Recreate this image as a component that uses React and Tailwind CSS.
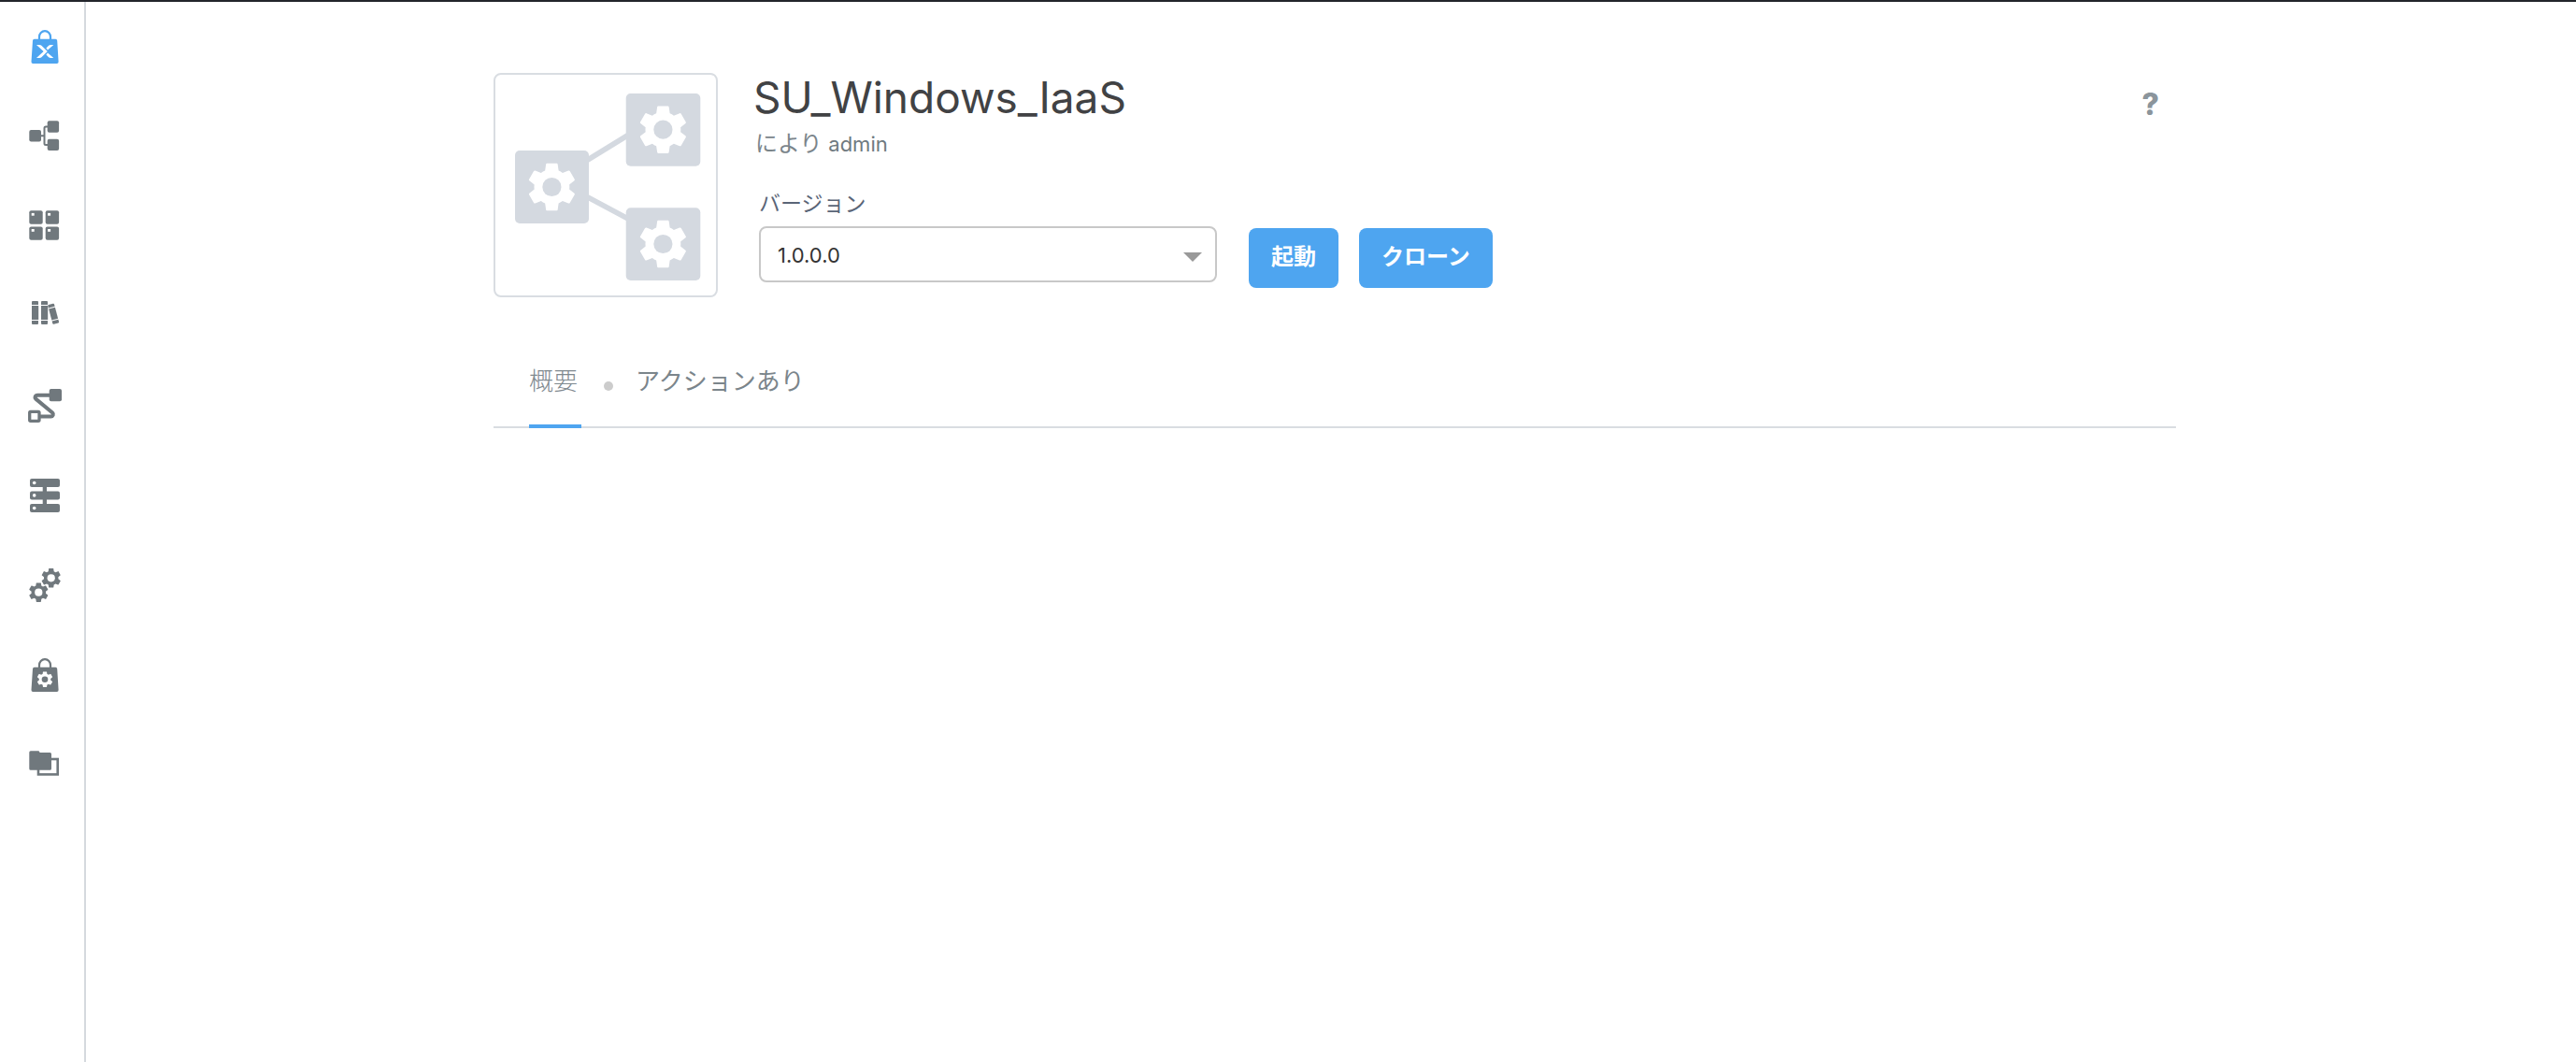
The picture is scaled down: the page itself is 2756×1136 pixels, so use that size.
const GEAR =
  "M7.43.98C7.47.66 7.5.34 7.5 0s-.03-.66-.07-.98l2.11-1.65c.19-.15.24-.42.12-.64l-2-3.46c-.12-.22-.39-.3-.61-.22l-2.49 1c-.52-.4-1.08-.73-1.69-.98l-.38-2.65C2.46-9.82 2.25-10 2-10h-4c-.25 0-.46.18-.49.42l-.38 2.65c-.61.25-1.17.59-1.69.98l-2.49-1c-.23-.09-.49 0-.61.22l-2 3.46c-.13.22-.07.49.12.64l2.11 1.65C-7.47-.66-7.5-.33-7.5 0s.03.66.07.98l-2.11 1.65c-.19.15-.24.42-.12.64l2 3.46c.12.22.39.3.61.22l2.49-1c.52.4 1.08.73 1.69.98l.38 2.65c.03.24.24.42.49.42h4c.25 0 .46-.18.49-.42l.38-2.65c.61-.25 1.17-.59 1.69-.98l2.49 1c.23.09.49 0 .61-.22l2-3.46c.12-.22.07-.49-.12-.64L7.43.98z";

function Gear({ x, y, scale, fill, hole }) {
  return (
    <g transform={`translate(${x} ${y}) scale(${scale})`}>
      <path d={GEAR} fill={fill} />
      <circle r="4" fill={hole} />
    </g>
  );
}

function Bag({ children }) {
  return (
    <>
      <path d="M18 17v-3.5a6 6.4 0 0 1 12 0V17" fill="none" stroke="currentColor" strokeWidth="2.2" />
      <path d="M12.8 15.7h22.6a1.8 1.8 0 0 1 1.8 1.7l1.4 22.7a1.8 1.8 0 0 1-1.8 1.9H11.3a1.8 1.8 0 0 1-1.8-1.9L11 17.4a1.8 1.8 0 0 1 1.8-1.7z" />
      {children}
    </>
  );
}

const NAV = [
  {
    label: "マーケットプレイス",
    active: true,
    icon: (
      <Bag>
        <path d="M15 22h3.400c.8 0 1.400.2 2 .8l6.400 6.200-6.400 6.200c-.6.600-1.200.8-2 .8H15l7.600-7z" fill="#fff" />
        <path d="M33.300 22h-3.200c-.8 0-1.400.2-2 .8l-2.700 2.700 1.600 1.900zM33.300 36h-3.200c-.8 0-1.400-.2-2-.8l-2.700-2.700 1.600-1.900z" fill="#fff" />
      </Bag>
    ),
  },
  {
    label: "アプリケーションプロファイル",
    icon: (
      <>
        <rect x="7.3" y="17" width="12.7" height="12.4" rx="2" />
        <rect x="26.7" y="7.3" width="12.4" height="12.4" rx="2" />
        <rect x="26.7" y="26.7" width="12.4" height="12.4" rx="2" />
        <path d="M19 23.2h4.500M28 13.500h-3a1.500 1.500 0 0 0-1.500 1.500v16.500a1.500 1.500 0 0 0 1.500 1.500h3" fill="none" stroke="currentColor" strokeWidth="2" />
      </>
    ),
  },
  {
    label: "デプロイメント",
    icon: (
      <>
        {[7.3, 24.7].map((x) =>
          [7.3, 24.4].map((y) => (
            <g key={`${x}-${y}`}>
              <rect x={x} y={y} width="14.4" height="14.4" rx="2" />
              <rect x={x + 2.4} y={y + 2.6} width="3" height="2.8" fill="#fff" />
            </g>
          ))
        )}
      </>
    ),
  },
  {
    label: "ライブラリ",
    icon: (
      <>
        {[10, 20].map((x) => (
          <g key={x}>
            <path d={`M${x} 12V9a1 1 0 0 1 1-1h5a1 1 0 0 1 1 1v3z`} />
            <rect x={x} y="13" width="7.2" height="15" />
            <path d={`M${x} 29v3a1 1 0 0 0 1 1h5a1 1 0 0 0 1-1v-3z`} />
          </g>
        ))}
        <g transform="translate(27 12.3) rotate(-15)">
          <path d="M0 3.400V1a1 1 0 0 1 1-1h5a1 1 0 0 1 1 1v2.400z" />
          <rect x="0" y="4.400" width="7" height="12.400" />
          <path d="M0 17.800v2.600a1 1 0 0 0 1 1h5a1 1 0 0 0 1-1v-2.600z" />
        </g>
      </>
    ),
  },
  {
    label: "ランブック",
    icon: (
      <>
        <rect x="28.700" y="6" width="13.300" height="13.300" rx="2" />
        <rect x="7.700" y="30.400" width="10.300" height="9.900" rx="1" fill="none" stroke="currentColor" strokeWidth="3.300" />
        <path d="M29 12.700H16.200c-2.500 0-3.500 2.700-1.700 4.200l17.600 14.600c1.600 1.400.6 3.900-1.500 3.900H19" fill="none" stroke="currentColor" strokeWidth="4" />
      </>
    ),
  },
  {
    label: "クラウド",
    icon: (
      <>
        <rect x="21.700" y="12" width="4.300" height="24" />
        {[6, 19.4, 33].map((y) => (
          <g key={y}>
            <rect x="8" y={y} width="32" height="9" rx="2" />
            <circle cx="12.700" cy={y + 4.5} r="1.800" fill="#fff" />
          </g>
        ))}
      </>
    ),
  },
  {
    label: "サービス",
    icon: (
      <>
        <Gear x={30.7} y={16.3} scale={1.03} fill="currentColor" hole="#fff" />
        <Gear x={17.3} y={31.7} scale={1.03} fill="currentColor" hole="#fff" />
      </>
    ),
  },
  {
    label: "管理",
    icon: (
      <Bag>
        <Gear x={24} y={28.7} scale={0.83} fill="#fff" hole="currentColor" />
      </Bag>
    ),
  },
  {
    label: "プロジェクト",
    icon: (
      <>
        <rect x="17" y="18" width="20.700" height="16.400" fill="none" stroke="currentColor" strokeWidth="2.600" />
        <path d="M8.800 9.300h8.700l1.200 1.700h10.800a1.500 1.500 0 0 1 1.500 1.500v15.700a1.500 1.500 0 0 1-1.500 1.500H8.800a1.500 1.500 0 0 1-1.500-1.500V10.800a1.500 1.500 0 0 1 1.500-1.500z" />
      </>
    ),
  },
];

function Sidebar() {
  return (
    <nav className="shrink-0 border-r-2 border-[#d5d9de]">
      <ul>
        {NAV.map((item) => (
          <li key={item.label}>
            <a
              href="#"
              aria-label={item.label}
              className={
                item.active
                  ? "flex h-24 items-center pr-[18px] pl-6 text-[#4ea5f0]"
                  : "flex h-24 items-center pr-[18px] pl-6 text-[#70787d]"
              }
            >
              <svg viewBox="0 0 48 48" className="size-12" fill="currentColor" aria-hidden="true">
                {item.icon}
              </svg>
            </a>
          </li>
        ))}
      </ul>
    </nav>
  );
}

function ProfileThumbnail() {
  const c = "#d4d9e0";
  return (
    <div className="size-60 shrink-0 rounded-lg border-2 border-[#d9dde2]">
      <svg viewBox="0 0 236 236" className="size-full" fill={c} aria-hidden="true">
        <path d="M98 91.500 142 64.500M98 130.500 142 154" stroke={c} strokeWidth="5.600" />
        <rect x="21" y="81" width="79" height="78" rx="5" />
        <rect x="139.700" y="20" width="79.600" height="77.700" rx="5" />
        <rect x="139.700" y="142.300" width="79.600" height="77.700" rx="5" />
        <Gear x={60.4} y={120} scale={2.52} fill="#fff" hole={c} />
        <Gear x={179.4} y={58.7} scale={2.52} fill="#fff" hole={c} />
        <Gear x={179.4} y={181} scale={2.52} fill="#fff" hole={c} />
      </svg>
    </div>
  );
}

function ActionButton({ children }) {
  return (
    <button type="button" className="h-16 rounded-lg bg-[#4ea5f0] px-6 pb-0.5 text-[24px] leading-8 font-bold text-white">
      {children}
    </button>
  );
}

export default function App() {
  return (
    <div className="flex min-h-screen flex-col border-t-2 border-[#22252b] bg-white font-['Inter','Noto_Sans_CJK_JP',sans-serif]">
      <div className="flex grow">
        <Sidebar />
        <main className="grow pt-19 pl-2">
          <div className="mx-auto max-w-[1800px]">
            <header className="flex items-start">
              <ProfileThumbnail />
              <div className="ml-[38px]">
                <h1 className="text-[46px] leading-[52px] text-[#414244]">SU_Windows_IaaS</h1>
                <p className="mt-2 pl-0.5 text-[24px] leading-8 text-[#7b858b]">
                  により <span className="text-[22px] leading-none text-[#6f7a80]">admin</span>
                </p>
                <div className="mt-8 pl-1.5">
                  <label htmlFor="version" className="block text-[23px] leading-8 text-[#5a6577]">
                    バージョン
                  </label>
                  <div className="mt-2 flex items-start gap-[34px]">
                    <div className="relative">
                      <select
                        id="version"
                        className="block h-15 w-[490px] appearance-none rounded-lg border-2 border-[#c8c8c8] bg-white px-[18px] pt-0.5 text-[22px] text-[#333333]"
                      >
                        <option>1.0.0.0</option>
                      </select>
                      <svg
                        viewBox="0 0 20 10"
                        className="pointer-events-none absolute top-7 right-4 h-[10px] w-5"
                        fill="#999999"
                        aria-hidden="true"
                      >
                        <path d="M0 0h20L10 10z" />
                      </svg>
                    </div>
                    <div className="mt-0.5 flex gap-[22px]">
                      <ActionButton>起動</ActionButton>
                      <ActionButton>クローン</ActionButton>
                    </div>
                  </div>
                </div>
              </div>
              <button
                type="button"
                aria-label="ヘルプ"
                className="mt-4 mr-[18px] ml-auto text-[32px] leading-9 font-extrabold text-[#8b959c]"
              >
                ?
              </button>
            </header>
            <div role="tablist" className="mt-16 flex gap-6 border-b-2 border-[#d9dde1] pl-[38px]">
              <button
                type="button"
                role="tab"
                aria-selected="true"
                className="-mb-0.5 border-b-4 border-[#4ea5f0] pr-1 pb-5 text-[26px] leading-[52px] font-light text-[#7f898f]"
              >
                概要
              </button>
              <span className="mt-[26px] size-[10px] rounded-full bg-[#cccccc]" />
              <button
                type="button"
                role="tab"
                aria-selected="false"
                className="-mb-0.5 pr-1 pb-6 text-[26px] leading-[52px] text-[#7b858b]"
              >
                アクションあり
              </button>
            </div>
          </div>
        </main>
      </div>
    </div>
  );
}
